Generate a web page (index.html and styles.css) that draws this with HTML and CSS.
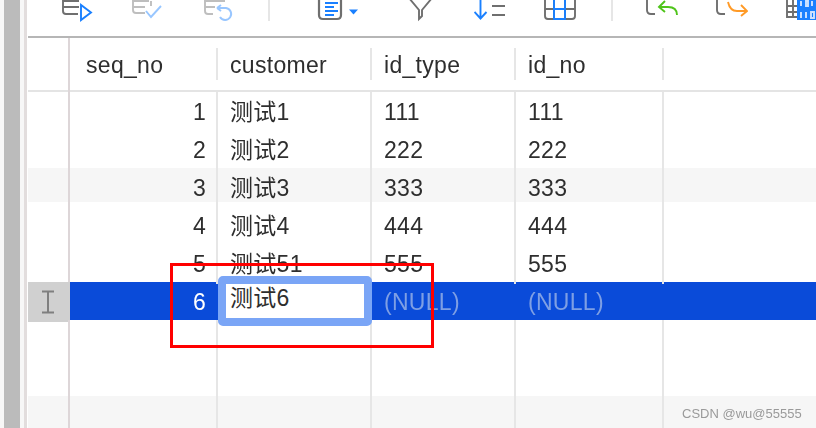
FILE: index.html
```html
<!DOCTYPE html>
<html lang="zh">
<head>
<meta charset="utf-8">
<title>Table data</title>
<link rel="stylesheet" href="styles.css">
</head>
<body>
<div class="app">
  <div class="sheet">
    <div class="rail"><div class="rail-bar"></div></div>
    <div class="main">
      <div class="toolbar">
        <svg class="ico" width="32" height="22" viewBox="0 0 32 22"><path d="M1 0v11q0 3 3 3h12M1 1h16M1 7h16" class="g"/><path d="M19 5v15l10-7.500z" class="b"/></svg>
        <svg class="ico" width="32" height="22" viewBox="0 0 32 22"><path d="M1 0v10q0 3 3 3h9M1 1h16M1 7h12M19 1v5" class="g pale"/><path d="M14 11l5 6 10-11" class="b pale"/></svg>
        <svg class="ico" width="32" height="22" viewBox="0 0 32 22"><path d="M1 0v11q0 3 3 3h5M1 1h20M1 7h10" class="g pale"/><path d="M13 8h9a6 6 0 1 1-6 9M13 8l4-3M13 8l4 3" class="b pale"/></svg>
        <div class="sep"></div>
        <svg class="ico" width="42" height="22" viewBox="0 0 42 22"><path d="M2-3v18q0 4 4 4h14q4 0 4-4V-3" class="g thick"/><path d="M8 3h13M8 7h9M8 11h13M8 15h9" class="b thick"/><path d="M32 9.500h9l-4.500 5z" class="solid"/></svg>
        <svg class="ico" width="26" height="22" viewBox="0 0 26 22"><path d="M1-2l10 12v9l3-3v-6L24-2" class="g"/></svg>
        <svg class="ico" width="32" height="22" viewBox="0 0 32 22"><path d="M6.500 0v19M0.500 12l6 6.500 6-6.500" class="b"/><path d="M18 6h13M18 15h13" class="g"/></svg>
        <svg class="ico" width="34" height="22" viewBox="0 0 34 22"><path d="M1-2v18q0 3 3 3h24q3 0 3-3V-2M1 9h9M21 9h10M10-2v21M21-2v21" class="g"/><path d="M10 0v19h11V0M10 9h11" class="b"/></svg>
        <div class="sep"></div>
        <svg class="ico" width="32" height="22" viewBox="0 0 32 22"><path d="M1 0v10q0 4 4 4h4" class="g"/><path d="M31 15q0-8-9-8h-8M19 1l-6 6 6 5" class="green"/></svg>
        <svg class="ico" width="32" height="22" viewBox="0 0 32 22"><path d="M1 0v10q0 4 4 4h4" class="g"/><path d="M12 2q2 9 9 9h9M25 5l6 6-6 5" class="orange"/></svg>
        <svg class="ico" width="30" height="22" viewBox="0 0 30 22"><path d="M1 0v17h11M1 6h11M1 12h11M7 0v17" class="g"/><rect x="11" y="-1" width="19" height="21" class="block"/><path d="M15 1v5M20 1h2v5h-2zM26 1v5M15 12v6M20 12v6M25 12h3v6h-3z" class="dots"/></svg>
      </div>
      <div class="row head">
        <div class="gut"></div>
        <div class="hc first">seq_no</div>
        <div class="hc">customer</div>
        <div class="hc">id_type</div>
        <div class="hc">id_no</div>
        <div></div>
      </div>
      <div class="rows">
        <div class="row"><div class="gut"></div><div class="c num">1</div><div class="c">测试1</div><div class="c">111</div><div class="c">111</div><div></div></div>
        <div class="row"><div class="gut"></div><div class="c num">2</div><div class="c">测试2</div><div class="c">222</div><div class="c">222</div><div></div></div>
        <div class="row alt"><div class="gut"></div><div class="c num">3</div><div class="c">测试3</div><div class="c">333</div><div class="c">333</div><div></div></div>
        <div class="row"><div class="gut"></div><div class="c num">4</div><div class="c">测试4</div><div class="c">444</div><div class="c">444</div><div></div></div>
        <div class="row"><div class="gut"></div><div class="c num">5</div><div class="c">测试51</div><div class="c">555</div><div class="c">555</div><div></div></div>
        <div class="row sel">
          <div class="gut"><svg width="14" height="24" viewBox="0 0 14 24"><path d="M1 1.500h12M1 22.500h12M7 1.500v21" class="ibeam"/></svg></div>
          <div class="c num">6</div>
          <div class="c editing"><div class="editor">测试6</div></div>
          <div class="c null">(NULL)</div>
          <div class="c null">(NULL)</div>
          <div></div>
        </div>
        <div class="row"><div class="gut"></div><div class="c"></div><div class="c"></div><div class="c"></div><div class="c"></div><div></div></div>
        <div class="row"><div class="gut"></div><div class="c"></div><div class="c"></div><div class="c"></div><div class="c"></div><div></div></div>
        <div class="row full"><div class="gut"></div><div class="c"></div><div class="c"></div><div class="c"></div><div class="c"></div><div></div></div>
      </div>
    </div>
  </div>
  <div class="redbox"></div>
  <div class="mark">CSDN @wu@55555</div>
</div>
</body>
</html>
```

FILE: styles.css
```css
* { box-sizing: border-box; }
html, body { margin: 0; height: 100%; background: #fff; overflow: hidden; }
body { font-family: "Liberation Sans", "Noto Sans CJK SC", sans-serif; color: #2e2e2e; }

.app { position: relative; width: 816px; height: 428px; overflow: hidden; }
.sheet { display: flex; height: 428px; filter: blur(0.55px); }

.rail { width: 28px; flex: none; padding-left: 4px; background: #f7f7f7; border-right: 1px solid #fff; position: relative; }
.rail-bar { width: 16px; height: 100%; background: #bbb; }
.rail::after { content: ""; position: absolute; top: 0; bottom: 0; left: 24px; width: 3px; background: #e2dddd; }

.main { flex: 1; min-width: 0; }

.toolbar {
  height: 38px;
  padding-left: 34px;
  border-bottom: 2px solid #b6b6b6;
  display: grid;
  grid-template-columns: 70px 72px 64px 49px 91px 66px 70px 67px 35px 70px 70px 1fr;
  align-items: start;
}
.ico { display: block; overflow: hidden; }
.sep { width: 2px; height: 21px; background: #e6e6e6; }
.ico path { fill: none; stroke-width: 1.9; }
.g { stroke: #6f6f6f; }
.b { stroke: #1a80ff; }
.pale { opacity: 0.45; }
.ico .thick { stroke-width: 2.2; }
.ico .solid { fill: #1a80ff; stroke: none; }
.green { stroke: #4fc41a; }
.orange { stroke: #ff9a26; }
.block { fill: #1a80ff; }
.ico .dots { stroke: #cfe3ff; }

.row {
  display: grid;
  grid-template-columns: 42px 148px 154px 144px 148px 1fr;
  height: 38px;
  font-size: 23px;
  letter-spacing: 0.3px;
  line-height: 40px;
}
.gut { border-right: 2px solid #ddd6d8; }
.c { border-right: 2px solid #e6e6e6; padding-left: 12px; white-space: nowrap; }
.num { text-align: right; padding: 0 10px 0 0; }

.head { height: 52px; line-height: 54px; }
.hc { padding-left: 12px; position: relative; }
.hc::after { content: ""; position: absolute; right: 0; top: 10px; height: 32px; width: 2px; background: #e6e6e6; }
.first { padding-left: 16px; }

.rows { border-top: 2px solid #e4e4e4; }
.alt { background: linear-gradient(#f6f6f6 34px, transparent 34px); }
.full { background: #f6f6f6; }

.sel { background: #0a4bd9; color: #fff; }
.sel .gut { background: #d0d0d0; border-right: 0; display: flex; align-items: center; justify-content: center; padding-right: 2px; }
.ibeam { fill: none; stroke: #7f7f7f; stroke-width: 2; }
.sel .c { border-right: 0; }
.sel .null { color: #7e9fe4; }
.sel .num { padding-right: 12px; }
.editing { position: relative; padding: 0; }
.editor {
  position: absolute;
  left: 0;
  top: -6px;
  width: 154px;
  height: 50px;
  padding-left: 4px;
  border: 8px solid #7aa5f6;
  border-radius: 5px;
  background: #fff;
  color: #2e2e2e;
  line-height: 29px;
}

.redbox { position: absolute; left: 170px; top: 263px; width: 264px; height: 85px; border: 3px solid #f00; }
.mark { position: absolute; left: 682px; top: 406px; font-size: 13px; line-height: 16px; color: #9a9a9a; white-space: nowrap; }
```
